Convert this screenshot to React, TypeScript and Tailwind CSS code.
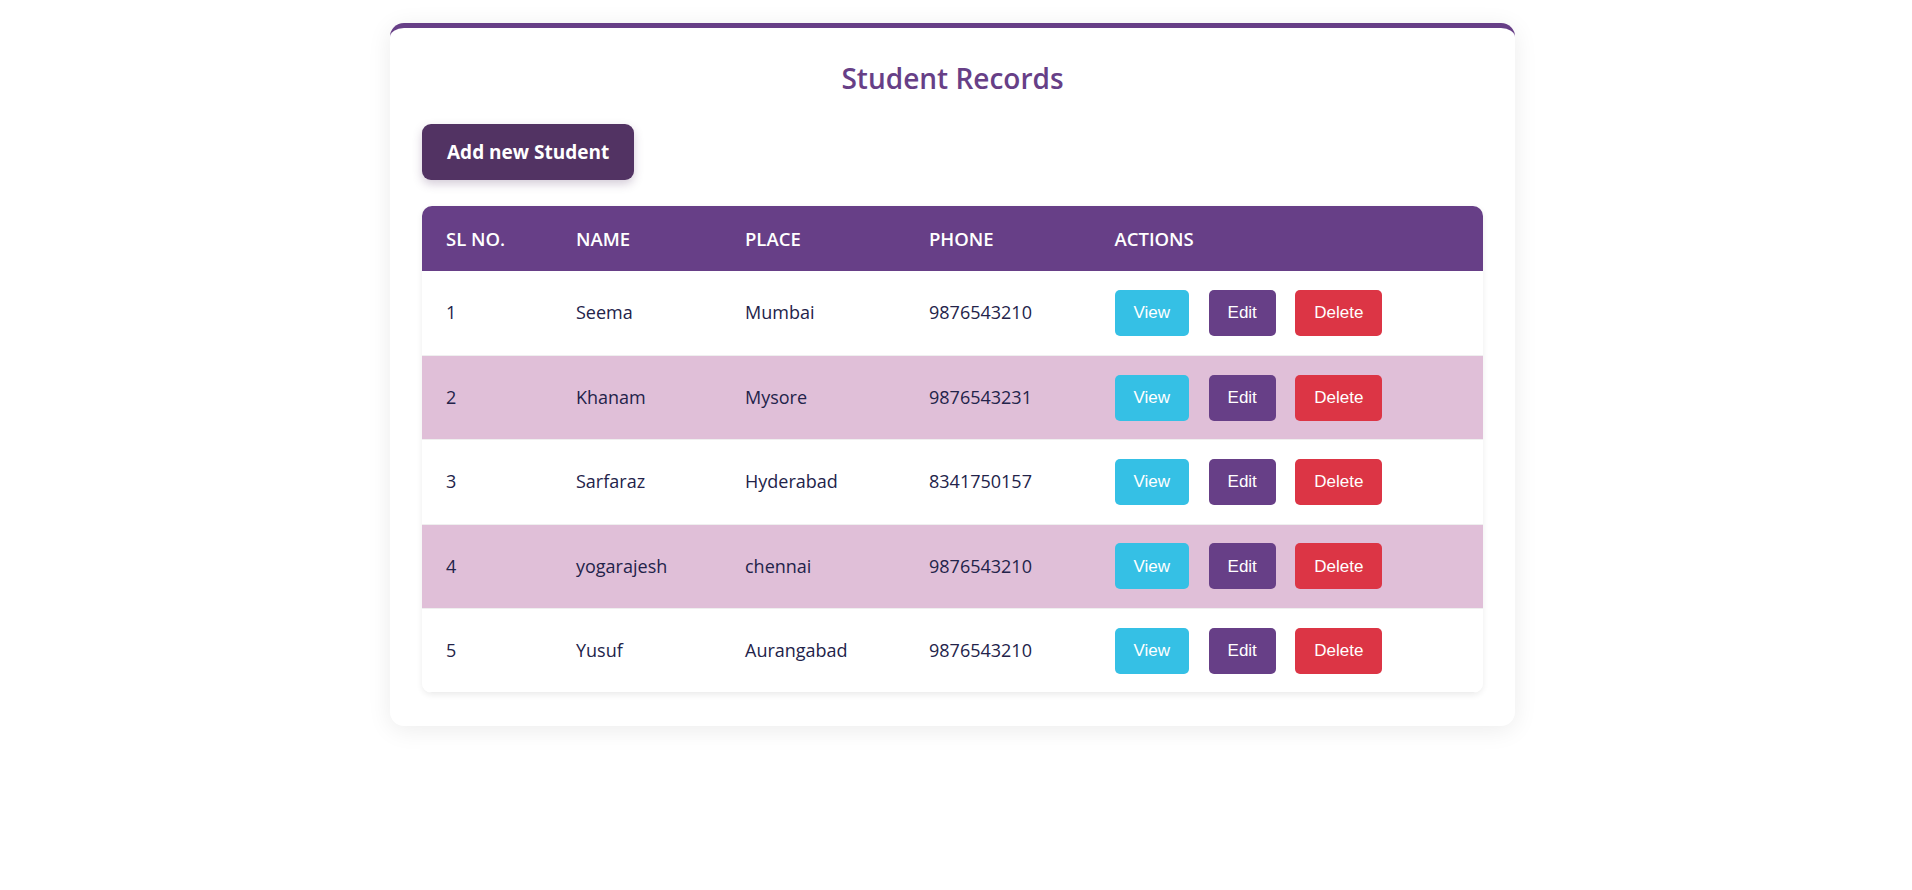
import React from 'react';

type Student = { id: number; name: string; place: string; phone: string };

const students: Student[] = [
  { id: 1, name: 'Seema', place: 'Mumbai', phone: '9876543210' },
  { id: 2, name: 'Khanam', place: 'Mysore', phone: '9876543231' },
  { id: 3, name: 'Sarfaraz', place: 'Hyderabad', phone: '8341750157' },
  { id: 4, name: 'yogarajesh', place: 'chennai', phone: '9876543210' },
  { id: 5, name: 'Yusuf', place: 'Aurangabad', phone: '9876543210' },
];

const btn = "h-[46px] rounded-[5px] text-white text-[17px] font-['Liberation_Sans',Arial,sans-serif] px-[19px] leading-none";

export default function App() {
  return (
    <div className="min-h-screen bg-white pr-[7px] font-['Open_Sans','Noto_Sans',sans-serif]">
      {/* Card */}
      <div className="mx-auto mt-[23px] w-[1125px] rounded-[14px] border-t-[5px] border-[#673f87] bg-white px-8 pt-[31px] pb-[33px] shadow-[0_4px_24px_rgba(0,0,0,0.08)]">
        <h1 className="text-center text-[28px] font-semibold leading-[38px] text-[#673f87]">Student Records</h1>

        <button className="mt-[27px] block h-[56px] rounded-[9px] bg-[#523363] px-[25px] text-[19px] font-bold text-white shadow-[0_4px_10px_rgba(82,51,99,0.25)]">
          Add new Student
        </button>

        {/* Table */}
        <div className="mt-[26px] overflow-hidden rounded-[10px] shadow-[0_2px_6px_rgba(0,0,0,0.08)]">
          <table className="w-full table-fixed border-collapse text-left">
            <colgroup>
              <col className="w-[130px]" />
              <col className="w-[169px]" />
              <col className="w-[184px]" />
              <col className="w-[185.5px]" />
              <col />
            </colgroup>
            <thead>
              <tr className="h-[65px] bg-[#673f87] text-[18.5px] text-white">
                <th className="pl-[24px] font-semibold">SL NO.</th>
                <th className="pl-[24px] font-semibold">NAME</th>
                <th className="pl-[24px] font-semibold">PLACE</th>
                <th className="pl-[24px] font-semibold">PHONE</th>
                <th className="pl-[24px] font-semibold">ACTIONS</th>
              </tr>
            </thead>
            <tbody>
              {students.map((s, i) => (
                <tr
                  key={s.id}
                  className={`h-[84.4px] border-b border-[#efefef] text-[18px] text-[#23234a] ${i % 2 === 1 ? 'bg-[#e0bfd8]' : 'bg-white'}`}
                >
                  <td className="pl-[24px]">{s.id}</td>
                  <td className="pl-[24px]">{s.name}</td>
                  <td className="pl-[24px]">{s.place}</td>
                  <td className="pl-[24px]">{s.phone}</td>
                  <td className="pl-[24px]">
                    <div className="flex items-center gap-[19.5px]">
                      <button className={`${btn} bg-[#35c0e5]`}>View</button>
                      <button className={`${btn} bg-[#673f87]`}>Edit</button>
                      <button className={`${btn} bg-[#dc3545]`}>Delete</button>
                    </div>
                  </td>
                </tr>
              ))}
            </tbody>
          </table>
        </div>
      </div>
    </div>
  );
}
